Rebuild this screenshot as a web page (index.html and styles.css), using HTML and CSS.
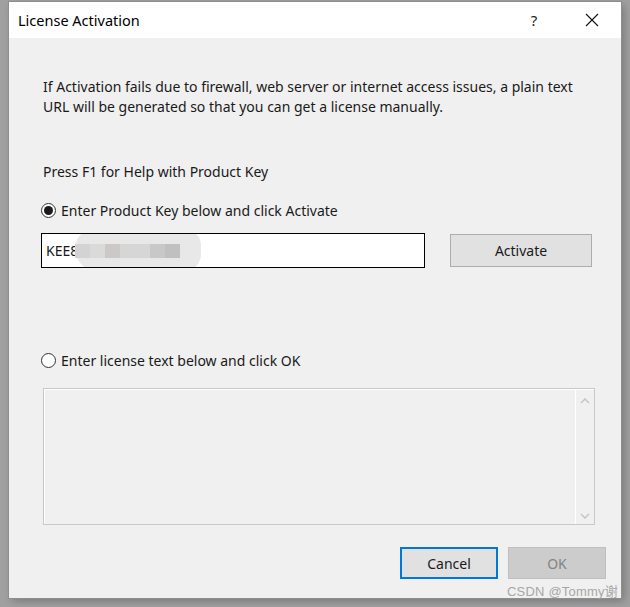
FILE: index.html
```html
<!DOCTYPE html>
<html>
<head>
<meta charset="utf-8">
<link rel="stylesheet" href="styles.css">
</head>
<body>
<div class="dialog">
  <div class="titlebar">
    <span class="title">License Activation</span>
    <span class="tb-btn help">?</span>
    <span class="tb-btn close">
      <svg width="14" height="14" viewBox="0 0 14 14"><path d="M1 1L13 13M13 1L1 13" stroke="#111" stroke-width="1.1" fill="none"/></svg>
    </span>
  </div>
  <div class="content">
    <p class="info">If Activation fails due to firewall, web server or internet access issues, a plain text URL will be generated so that you can get a license manually.</p>
    <p class="help-line">Press F1 for Help with Product Key</p>
    <div class="radio-row first">
      <span class="radio checked"><span class="dot"></span></span>
      <span>Enter Product Key below and click Activate</span>
    </div>
    <div class="key-row">
      <div class="keybox">
        <span class="keytext">KEE8</span>
        <span class="blur"><i class="b1"></i><i class="b2"></i><i class="b3"></i><i class="b4"></i><i class="b5"></i><i class="b6"></i></span>
      </div>
      <button class="btn activate">Activate</button>
    </div>
    <div class="radio-row second">
      <span class="radio"></span>
      <span>Enter license text below and click OK</span>
    </div>
    <div class="textarea">
      <div class="ta-body"></div>
      <div class="scroll">
        <svg width="10" height="8" viewBox="0 0 10 8"><path d="M1 6L5 2L9 6" stroke="#c2c2c2" stroke-width="1.3" fill="none"/></svg>
        <svg width="10" height="8" viewBox="0 0 10 8"><path d="M1 2L5 6L9 2" stroke="#c2c2c2" stroke-width="1.3" fill="none"/></svg>
      </div>
    </div>
    <div class="footer">
      <button class="btn cancel">Cancel</button>
      <button class="btn ok" disabled>OK</button>
    </div>
  </div>
</div>
<div class="watermark">CSDN @Tommy谢</div>
</body>
</html>
```
FILE: styles.css
```css
html, body {
  margin: 0;
  padding: 0;
}
body {
  width: 630px;
  height: 607px;
  background: #a0a0a0;
  font-family: "Noto Sans", "Open Sans", sans-serif;
  color: #1a1a1a;
  position: relative;
  overflow: hidden;
}
.dialog {
  margin: 2px 0 0 9px;
  width: 612px;
  height: 596px;
  background: #f0f0f0;
  box-shadow: 0 0 0 1px #8e8e8e, 3px 3px 8px rgba(0,0,0,0.25);
  display: flex;
  flex-direction: column;
}
.titlebar {
  height: 36px;
  background: #fff;
  display: flex;
  align-items: center;
  padding-left: 9px;
  font-size: 14.5px;
}
.title {
  flex: 1;
  color: #000;
}
.tb-btn {
  display: flex;
  align-items: center;
  justify-content: center;
  width: 46px;
  height: 36px;
  color: #222;
}
.help {
  font-size: 15px;
  margin-right: 12px;
}
.close {
  margin-right: 6px;
}
.content {
  flex: 1;
  padding: 0 26px 0 32px;
  display: flex;
  flex-direction: column;
  font-size: 14px;
}
.info {
  margin: 39px 0 0 2px;
  line-height: 19.5px;
  width: 545px;
}
.help-line {
  margin: 46px 0 0 2px;
  line-height: 19px;
}
.radio-row {
  display: flex;
  align-items: center;
  gap: 5px;
  line-height: 19px;
}
.radio-row.first {
  margin-top: 20px;
}
.radio-row.second {
  margin-top: 83px;
}
.radio {
  width: 13px;
  height: 13px;
  border: 1px solid #333;
  border-radius: 50%;
  background: #fff;
  display: flex;
  align-items: center;
  justify-content: center;
}
.radio .dot {
  width: 9px;
  height: 9px;
  border-radius: 50%;
  background: #1a1a1a;
}
.key-row {
  display: flex;
  align-items: center;
  margin-top: 13px;
}
.keybox {
  position: relative;
  width: 378px;
  height: 33px;
  border: 1px solid #000;
  background: #fff;
  display: flex;
  align-items: center;
  padding-left: 4px;
  box-sizing: content-box;
  overflow: hidden;
}
.keytext {
  font-size: 14px;
}
.blur {
  position: absolute;
  left: 33px;
  top: -4px;
  width: 126px;
  height: 42px;
  background: #e8e8e8;
  border-radius: 30px 25px 30px 40px;
  display: flex;
  align-items: center;
  padding-left: 0;
  box-sizing: border-box;
}
.blur i {
  display: block;
  height: 14px;
  background: #d2d2d2;
}
.blur .b1 { width: 15px; background: #d3d3d3; }
.blur .b2 { width: 15px; background: #dadada; }
.blur .b3 { width: 15px; background: #cdc8c8; }
.blur .b4 { width: 30px; background: #d6d6d6; }
.blur .b5 { width: 15px; background: #c8c8c8; }
.blur .b6 { width: 15px; background: #c0c0c0; }
.btn {
  font-family: inherit;
  font-size: 14px;
  color: #1a1a1a;
  background: #e1e1e1;
  border: 1px solid #adadad;
  padding: 0;
}
.activate {
  margin-left: 25px;
  width: 142px;
  height: 33px;
}
.textarea {
  margin: 18px 0 0 2px;
  width: 552px;
  height: 137px;
  border: 1px solid #c8c8c8;
  box-sizing: border-box;
  display: flex;
  box-shadow: inset 1px 1px 0 #fff;
}
.ta-body {
  flex: 1;
}
.scroll {
  width: 18px;
  border-left: 1px solid #fff;
  display: flex;
  flex-direction: column;
  justify-content: space-between;
  align-items: center;
  padding: 8px 0 4px;
}
.footer {
  display: flex;
  justify-content: flex-end;
  gap: 10px;
  margin-top: 22px;
  margin-right: -11px;
}
.cancel {
  width: 98px;
  height: 32px;
  border: 2px solid #0078d7;
}
.ok {
  width: 98px;
  height: 32px;
  background: #cccccc;
  border-color: #bfbfbf;
  color: #838383;
}
.watermark {
  position: absolute;
  left: 507px;
  top: 581px;
  font-family: "Liberation Sans", "Noto Sans CJK SC", sans-serif;
  font-size: 13px;
  color: #a7a7a7;
  letter-spacing: 0.2px;
}
```
